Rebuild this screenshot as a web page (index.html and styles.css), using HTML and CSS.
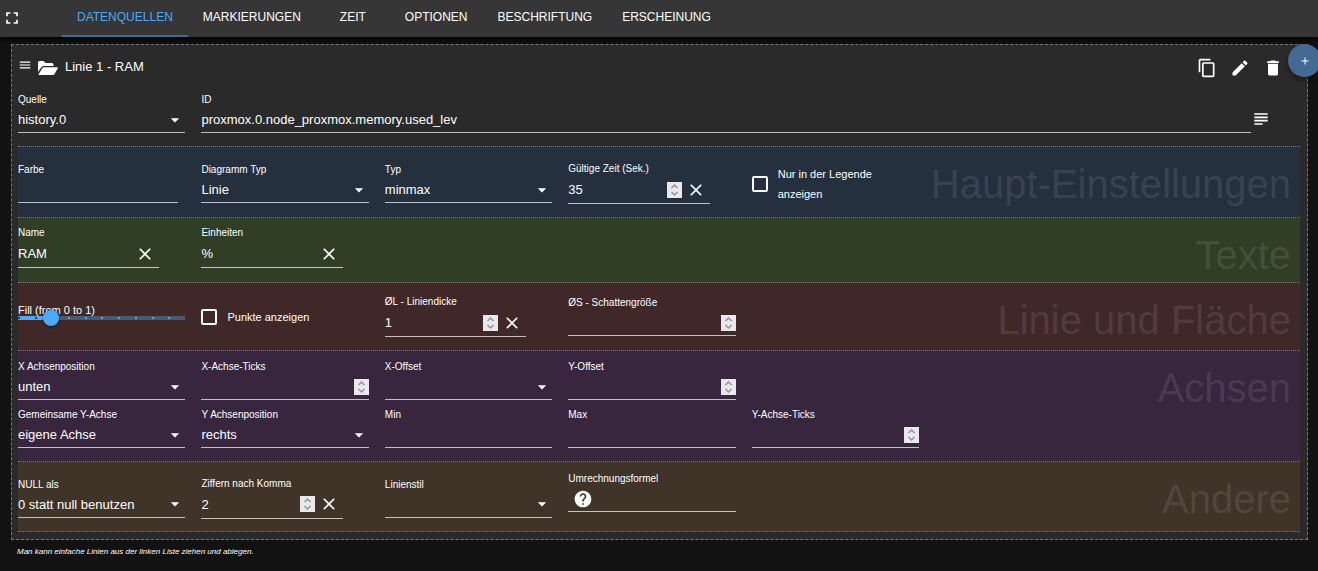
FILE: index.html
```html
<!DOCTYPE html>
<html lang="de">
<head>
<meta charset="utf-8">
<meta name="viewport" content="width=device-width, initial-scale=1">
<title>Datenquellen</title>
<link rel="stylesheet" href="styles.css">
</head>
<body>
<svg class="sprite" aria-hidden="true">
  <symbol id="i-down" viewBox="0 0 24 24"><path d="M7 10l5 5 5-5z"/></symbol>
  <symbol id="i-close" viewBox="0 0 24 24"><path d="M19 6.41L17.59 5 12 10.59 6.41 5 5 6.41 10.59 12 5 17.59 6.41 19 12 13.41 17.59 19 19 17.59 13.41 12z"/></symbol>
  <symbol id="i-spin" viewBox="0 0 15 16"><path d="M4.5 6l3-3 3 3M4.5 10l3 3 3-3" fill="none" stroke="#92929c" stroke-width="1.5"/></symbol>
</svg>

<header class="topbar">
  <button class="icon-btn fullscreen" aria-label="Vollbild"><svg class="icon" viewBox="0 0 24 24"><path d="M7 14H5v5h5v-2H7v-3zm-2-4h2V7h3V5H5v5zm12 7h-3v2h5v-5h-2v3zM14 5v2h3v3h2V5h-5z"/></svg></button>
  <nav class="tabs" role="tablist">
    <button class="tab tab-active" role="tab" aria-selected="true">DATENQUELLEN</button>
    <button class="tab" role="tab">MARKIERUNGEN</button>
    <button class="tab" role="tab">ZEIT</button>
    <button class="tab" role="tab">OPTIONEN</button>
    <button class="tab" role="tab">BESCHRIFTUNG</button>
    <button class="tab" role="tab">ERSCHEINUNG</button>
  </nav>
</header>

<main class="content">
  <button class="fab" aria-label="Linie hinzufügen"><svg viewBox="0 0 24 24"><path d="M19 13h-6v6h-2v-6H5v-2h6V5h2v6h6v2z"/></svg></button>

  <article class="panel">
    <div class="panel-head">
      <svg class="drag" viewBox="0 0 24 24"><path d="M3 18h18v-2H3v2zm0-5h18v-2H3v2zm0-7v2h18V6H3z"/></svg>
      <svg class="folder" viewBox="0 0 20 14"><path d="M0 11V1.500Q0 0 1.500 0H5.500L7.500 2H14Q15.500 2 15.500 3.500V5H6Q4.300 5 3.400 6.300Z"/><path d="M.6 13.200L4.300 7.200Q4.800 6.300 6 6.300H19.200Q20.300 6.300 19.800 7.300L16.700 12.700Q16 14 14.700 14H1.200Q.2 14 .6 13.200Z"/></svg>
      <h1 class="panel-title">Linie 1 - RAM</h1>
      <div class="actions">
        <button class="icon-btn" aria-label="Kopieren"><svg class="icon" viewBox="0 0 24 24"><path d="M16 1H4c-1.100 0-2 .9-2 2v14h2V3h12V1zm3 4H8c-1.100 0-2 .9-2 2v14c0 1.100.9 2 2 2h11c1.100 0 2-.9 2-2V7c0-1.100-.9-2-2-2zm0 16H8V7h11v14z"/></svg></button>
        <button class="icon-btn" aria-label="Bearbeiten"><svg class="icon" viewBox="0 0 24 24"><path d="M3 17.250V21h3.750L17.810 9.940l-3.750-3.750L3 17.250zM20.710 7.040c.39-.39.39-1.020 0-1.410l-2.340-2.340c-.39-.39-1.020-.39-1.410 0l-1.830 1.830 3.750 3.750 1.830-1.830z"/></svg></button>
        <button class="icon-btn" aria-label="Löschen"><svg class="icon" viewBox="0 0 24 24"><path d="M6 19c0 1.100.9 2 2 2h8c1.100 0 2-.9 2-2V7H6v12zM19 4h-3.500l-1-1h-5l-1 1H5v2h14V4z"/></svg></button>
      </div>
    </div>

    <div class="source-row">
      <div class="field">
        <label for="source">Quelle</label>
        <div class="control"><select id="source"><option>history.0</option></select><svg class="arrow"><use href="#i-down"/></svg></div>
      </div>
      <div class="source-id">
        <div class="field field-wide">
          <label for="oid">ID</label>
          <div class="control"><input id="oid" type="text" value="proxmox.0.node_proxmox.memory.used_lev"></div>
        </div>
        <button class="icon-btn" aria-label="ID auswählen"><svg class="icon" viewBox="0 0 24 24"><path d="M4 5h16v2H4zM4 9h16v2H4zM4 13h16v2H4zM4 17h10v2H4z"/></svg></button>
      </div>
    </div>

    <section class="group group-main">
      <h2 class="group-title">Haupt-Einstellungen</h2>
      <div class="fields">
        <div class="field field-color">
          <label for="color">Farbe</label>
          <div class="control"><input id="color" type="text"></div>
        </div>
        <div class="field">
          <label for="chart">Diagramm Typ</label>
          <div class="control"><select id="chart"><option>Linie</option></select><svg class="arrow"><use href="#i-down"/></svg></div>
        </div>
        <div class="field">
          <label for="agg">Typ</label>
          <div class="control"><select id="agg"><option>minmax</option></select><svg class="arrow"><use href="#i-down"/></svg></div>
        </div>
        <div class="field field-clear">
          <label for="valid">Gültige Zeit (Sek.)</label>
          <div class="control"><input id="valid" type="number" value="35"><svg class="spin"><use href="#i-spin"/></svg><button class="clear" aria-label="Leeren"><svg class="icon-x"><use href="#i-close"/></svg></button></div>
        </div>
        <label class="check"><input type="checkbox"><span>Nur in der Legende anzeigen</span></label>
      </div>
    </section>

    <section class="group group-text">
      <h2 class="group-title">Texte</h2>
      <div class="fields">
        <div class="field field-clear">
          <label for="name">Name</label>
          <div class="control"><input id="name" type="text" value="RAM"><button class="clear" aria-label="Leeren"><svg class="icon-x"><use href="#i-close"/></svg></button></div>
        </div>
        <div class="field field-clear">
          <label for="unit">Einheiten</label>
          <div class="control"><input id="unit" type="text" value="%"><button class="clear" aria-label="Leeren"><svg class="icon-x"><use href="#i-close"/></svg></button></div>
        </div>
      </div>
    </section>

    <section class="group group-line">
      <h2 class="group-title">Linie und Fläche</h2>
      <div class="fields">
        <div class="slider">
          <label for="fill">Fill (from 0 to 1)</label>
          <div class="slider-track"><input id="fill" type="range" min="0" max="1" step="0.1" value="0.2"></div>
        </div>
        <label class="check"><input type="checkbox"><span>Punkte anzeigen</span></label>
        <div class="field field-clear">
          <label for="thick">ØL - Liniendicke</label>
          <div class="control"><input id="thick" type="number" value="1"><svg class="spin"><use href="#i-spin"/></svg><button class="clear" aria-label="Leeren"><svg class="icon-x"><use href="#i-close"/></svg></button></div>
        </div>
        <div class="field">
          <label for="shadow">ØS - Schattengröße</label>
          <div class="control"><input id="shadow" type="number"><svg class="spin"><use href="#i-spin"/></svg></div>
        </div>
      </div>
    </section>

    <section class="group group-axes">
      <h2 class="group-title">Achsen</h2>
      <div class="fields">
        <div class="field">
          <label for="xpos">X Achsenposition</label>
          <div class="control"><select id="xpos"><option>unten</option></select><svg class="arrow"><use href="#i-down"/></svg></div>
        </div>
        <div class="field">
          <label for="xticks">X-Achse-Ticks</label>
          <div class="control"><input id="xticks" type="number"><svg class="spin"><use href="#i-spin"/></svg></div>
        </div>
        <div class="field">
          <label for="xoff">X-Offset</label>
          <div class="control"><select id="xoff"><option></option></select><svg class="arrow"><use href="#i-down"/></svg></div>
        </div>
        <div class="field">
          <label for="yoff">Y-Offset</label>
          <div class="control"><input id="yoff" type="number"><svg class="spin"><use href="#i-spin"/></svg></div>
        </div>
        <div class="field field-first">
          <label for="yshared">Gemeinsame Y-Achse</label>
          <div class="control"><select id="yshared"><option>eigene Achse</option></select><svg class="arrow"><use href="#i-down"/></svg></div>
        </div>
        <div class="field">
          <label for="ypos">Y Achsenposition</label>
          <div class="control"><select id="ypos"><option>rechts</option></select><svg class="arrow"><use href="#i-down"/></svg></div>
        </div>
        <div class="field">
          <label for="min">Min</label>
          <div class="control"><input id="min" type="text"></div>
        </div>
        <div class="field">
          <label for="max">Max</label>
          <div class="control"><input id="max" type="text"></div>
        </div>
        <div class="field">
          <label for="yticks">Y-Achse-Ticks</label>
          <div class="control"><input id="yticks" type="number"><svg class="spin"><use href="#i-spin"/></svg></div>
        </div>
      </div>
    </section>

    <section class="group group-other">
      <h2 class="group-title">Andere</h2>
      <div class="fields">
        <div class="field">
          <label for="nulls">NULL als</label>
          <div class="control"><select id="nulls"><option>0 statt null benutzen</option></select><svg class="arrow"><use href="#i-down"/></svg></div>
        </div>
        <div class="field field-clear">
          <label for="digits">Ziffern nach Komma</label>
          <div class="control"><input id="digits" type="number" value="2"><svg class="spin"><use href="#i-spin"/></svg><button class="clear" aria-label="Leeren"><svg class="icon-x"><use href="#i-close"/></svg></button></div>
        </div>
        <div class="field">
          <label for="style">Linienstil</label>
          <div class="control"><select id="style"><option></option></select><svg class="arrow"><use href="#i-down"/></svg></div>
        </div>
        <div class="field field-formula">
          <label for="formula">Umrechnungsformel</label>
          <div class="control"><button class="icon-btn help" aria-label="Hilfe"><svg class="icon" viewBox="0 0 24 24"><path d="M12 2C6.480 2 2 6.480 2 12s4.480 10 10 10 10-4.480 10-10S17.520 2 12 2zm1 17h-2v-2h2v2zm2.070-7.750l-.9.920C13.450 12.900 13 13.500 13 15h-2v-.5c0-1.100.45-2.100 1.170-2.830l1.240-1.260c.37-.36.59-.86.59-1.410 0-1.100-.9-2-2-2s-2 .9-2 2H8c0-2.210 1.790-4 4-4s4 1.790 4 4c0 .88-.36 1.680-.93 2.250z"/></svg></button><input id="formula" type="text"></div>
        </div>
      </div>
    </section>
  </article>

  <p class="hint">Man kann einfache Linien aus der linken Liste ziehen und ablegen.</p>
</main>
</body>
</html>
```
FILE: styles.css
```css
* {
  box-sizing: border-box;
}

body {
  margin: 0;
  min-height: 100vh;
  overflow: hidden;
  background: #121212;
  color: #fff;
  font-family: "Liberation Sans", Arial, sans-serif;
  font-size: 13px;
}

button,
input,
select {
  margin: 0;
  padding: 0;
  border: 0;
  background: none;
  color: inherit;
  font: inherit;
  outline: none;
}

svg {
  display: block;
  fill: currentColor;
}

.sprite {
  display: none;
}

.icon {
  width: 20px;
  height: 20px;
}

.icon-btn {
  flex: none;
}

/* Top bar */
.topbar {
  display: flex;
  align-items: stretch;
  height: 37px;
  background: #363636;
  box-shadow: 0 2px 6px #000;
}

.fullscreen {
  width: 62px;
  padding: 0 0 2px 2px;
}

.tabs {
  display: flex;
}

.tab {
  min-width: 74px;
  padding: 0 15px 2px;
  border-bottom: 2px solid transparent;
  font-size: 12px;
}

.tab-active {
  border-color: #436a93;
  color: #4dabf5;
}

/* Panel */
.content {
  position: relative;
  padding: 7px 10px 0 11px;
}

.panel {
  padding: 0 7px 7px 6px;
  border: 1px dashed #777;
  background: #2a2a2a;
}

.fab {
  position: absolute;
  top: 7px;
  right: -3px;
  display: grid;
  place-items: center;
  width: 33px;
  height: 33px;
  border-radius: 50%;
  background: #436a93;
  box-shadow: 0 3px 6px rgba(0, 0, 0, 0.4);
}

.fab svg {
  width: 12px;
  height: 12px;
}

.panel-head {
  display: flex;
  align-items: center;
  height: 40px;
  padding-top: 4px;
}

.drag {
  width: 14px;
  height: 14px;
  margin-bottom: 4px;
}

.folder {
  width: 20px;
  height: 14px;
  margin: 2px 7px 0 6px;
}

.panel-title {
  margin: 0 0 2px;
  font-size: 13px;
  font-weight: 400;
}

.actions {
  display: flex;
  gap: 13px;
  margin-left: auto;
  padding: 2px 17px 0 0;
}

.source-row,
.fields {
  display: grid;
  grid-template-columns: repeat(7, 1fr);
  align-items: center;
  margin-right: -2px;
}

.source-row {
  padding-bottom: 13px;
}

.source-id {
  display: flex;
  grid-column: 2 / -1;
  align-items: flex-end;
  padding-right: 31px;
}

.source-id .icon-btn {
  padding-bottom: 4px;
}

/* Fields */
.field {
  margin-right: 16px;
}

.field-wide {
  flex: 1;
  margin-right: 0;
}

.field-color {
  margin-right: 23px;
}

.field-clear {
  margin-right: 42px;
}

.field label {
  display: block;
  padding-top: 8px;
  font-size: 10px;
  line-height: 14px;
}

.control {
  position: relative;
  display: flex;
  align-items: center;
  height: 26px;
  border-bottom: 1px solid rgba(255, 255, 255, 0.7);
}

.field-clear .control {
  height: 28px;
}

.control input,
.control select {
  flex: 1;
  min-width: 0;
  width: 100%;
  height: 100%;
  appearance: none;
}

.control input[type="number"] {
  appearance: textfield;
}

.control input::-webkit-inner-spin-button,
.control input::-webkit-outer-spin-button {
  display: none;
  margin: 0;
}

.arrow {
  position: absolute;
  right: 0;
  width: 20px;
  height: 20px;
  pointer-events: none;
}

.spin {
  flex: none;
  width: 15px;
  height: 16px;
  background: #e9e9ed;
}

.clear {
  display: grid;
  flex: none;
  place-items: center;
  width: 28px;
  height: 27px;
}

.icon-x {
  width: 20px;
  height: 20px;
}

.field-formula {
  margin-bottom: 11px;
}

.help {
  margin-left: 5px;
}

/* Tick boxes */
.check {
  display: flex;
  align-items: center;
  gap: 10px;
  padding: 10px 16px 0 0;
  font-size: 11px;
  line-height: 20px;
}

.check input {
  flex: none;
  width: 16px;
  height: 16px;
  border: 2px solid #fff;
  border-radius: 2px;
  appearance: none;
}

/* Slider */
.slider {
  height: 50px;
  margin-right: 16px;
  padding-top: 16px;
  font-size: 11px;
  line-height: 14px;
}

.slider label {
  display: block;
}

.slider-track {
  height: 16px;
  margin-top: -7px;
  background:
    repeating-linear-gradient(90deg, #26384c 0 2px, transparent 2px 17px) 0 7px / 20% 2px no-repeat,
    repeating-linear-gradient(90deg, #4dabf5 0 2px, transparent 2px 10%) 0 7px / 100% 2px no-repeat,
    linear-gradient(90deg, #4dabf5 20%, #465c75 20%) 0 6px / 100% 4px no-repeat;
}

.slider input {
  display: block;
  width: calc(100% + 16px);
  height: 16px;
  margin: 0 -8px;
  appearance: none;
}

.slider input::-webkit-slider-thumb {
  width: 16px;
  height: 16px;
  border-radius: 50%;
  background: #4dabf5;
  box-shadow: 0 1px 3px rgba(0, 0, 0, 0.5);
  appearance: none;
}

/* Groups */
.group {
  position: relative;
  border-bottom: 1px dotted #7d7d7d;
}

.group-title {
  position: absolute;
  top: 14px;
  right: 9px;
  margin: 0;
  color: rgba(255, 255, 255, 0.1);
  font-size: 40px;
  font-weight: 400;
  line-height: 46px;
}

.group-main {
  padding: 7px 0 13px;
  border-top: 1px dotted #7d7d7d;
  background: #25303e;
}

.group-text {
  padding-bottom: 14px;
  background: #303e26;
}

.group-line {
  padding: 4px 0 13px;
  background: #402828;
}

.group-axes {
  padding: 1px 0 13px;
  background: #38263f;
}

.group-other {
  padding: 2px 0 8px;
  background: #403428;
}

.field-first {
  grid-column-start: 1;
}

.hint {
  margin: 0;
  padding: 7px 6px;
  font-size: 8px;
  font-style: italic;
  line-height: 10px;
}
```
